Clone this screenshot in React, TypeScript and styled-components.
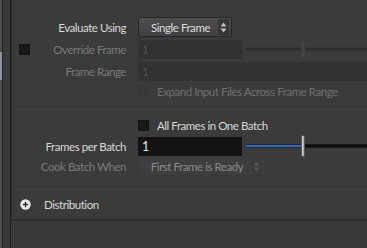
import React from 'react';
import styled, { createGlobalStyle } from 'styled-components';

const GlobalStyle = createGlobalStyle`
  html, body {
    margin: 0;
    padding: 0;
    background: #3a3a3a;
  }
  body {
    font-family: Lato, "Liberation Sans", sans-serif;
    font-size: 11.5px;
    letter-spacing: -0.45px;
  }
`;

const Screen = styled.div`
  width: 367px;
  height: 248px;
  display: flex;
  overflow: hidden;
  background: #3a3a3a;
`;

const Shelf = styled.div`
  width: 2px;
  background: #4e4e4e;
  display: flex;
  flex-direction: column;
  padding-top: 52px;
`;

const ShelfThumb = styled.div`
  height: 28px;
  background: #8d96a0;
`;

const VLine = styled.div<{ $color: string }>`
  width: 1px;
  background: ${p => p.$color};
`;

const Gutter = styled.div`
  width: 7px;
  background: #3a3a3a;
`;

const Main = styled.div`
  flex: 1;
  display: flex;
  flex-direction: column;
`;

const Panel = styled.div`
  height: 219px;
  border-left: 1px solid #2b2b2b;
  border-bottom: 2px solid #2b2b2b;
  background: #3b3b3b;
  display: flex;
  flex-direction: column;
`;

const Section = styled.div<{ $height: number; $top: number }>`
  height: ${p => p.$height}px;
  padding-top: ${p => p.$top}px;
  box-sizing: border-box;
  border-bottom: 1px solid #333333;
  display: flex;
  flex-direction: column;
  gap: 2px;
`;

const Row = styled.div<{ $h?: number }>`
  display: grid;
  grid-template-columns: 26px 88px 12px 1fr;
  align-items: center;
  height: ${p => p.$h ?? 20}px;
`;

const Label = styled.span<{ $off?: boolean }>`
  grid-column: 2;
  text-align: right;
  white-space: nowrap;
  color: ${p => (p.$off ? '#7a7a7a' : '#d8d8d8')};
`;

const Check = styled.div<{ $off?: boolean }>`
  width: 11px;
  height: 11px;
  box-sizing: border-box;
  background: ${p => (p.$off ? '#393939' : '#1a1a1a')};
  border: 1px solid ${p => (p.$off ? '#373737' : '#121212')};
`;

const LeftCheck = styled(Check)`
  grid-column: 1;
  margin-left: 7px;
`;

const Control = styled.div`
  grid-column: 4;
  display: flex;
  align-items: center;
  height: 100%;
  gap: 8px;
  min-width: 0;
`;

const Dropdown = styled.div<{ $w: number; $off?: boolean }>`
  width: ${p => p.$w}px;
  height: 20px;
  box-sizing: border-box;
  display: flex;
  align-items: center;
  border-radius: 2px;
  white-space: nowrap;
  background: ${p =>
    p.$off ? '#3e3e3e' : 'linear-gradient(#4d4d4d, #414141)'};
  border: 1px solid ${p => (p.$off ? '#383838' : '#262626')};
  color: ${p => (p.$off ? '#8a8a8a' : '#dcdcdc')};
`;

const DropText = styled.span`
  flex: 1;
  text-align: center;
  padding-left: 4px;
`;

const DropArrows = styled.div<{ $off?: boolean }>`
  width: 11px;
  height: 16px;
  margin-right: 2px;
  display: flex;
  align-items: center;
  justify-content: center;
  background: ${p => (p.$off ? '#3a3a3a' : '#363636')};
  border-radius: 1px;
`;

const Field = styled.div<{ $w?: number; $off?: boolean; $dark?: boolean }>`
  width: ${p => (p.$w ? `${p.$w}px` : 'auto')};
  flex: ${p => (p.$w ? 'none' : '1')};
  height: 19px;
  box-sizing: border-box;
  padding-left: 4px;
  display: flex;
  align-items: center;
  background: ${p => (p.$dark ? '#131313' : p.$off ? '#323232' : '#2a2a2a')};
  color: ${p => (p.$off ? '#555555' : '#e2e2e2')};
  font-size: ${p => (p.$dark ? 12.5 : 11.5)}px;
`;

const Slider = styled.div`
  flex: 1;
  height: 100%;
  display: flex;
  align-items: center;
  margin-left: -4px;
`;

const Track = styled.div<{ $w?: number; $color: string; $edge: string }>`
  width: ${p => (p.$w ? `${p.$w}px` : 'auto')};
  flex: ${p => (p.$w ? 'none' : '1')};
  height: 2px;
  background: ${p => p.$color};
  border-top: 1px solid ${p => p.$edge};
  border-bottom: 1px solid ${p => p.$edge};
`;

const Handle = styled.div<{ $off?: boolean }>`
  width: 4px;
  height: ${p => (p.$off ? 17 : 22)}px;
  box-sizing: border-box;
  border-radius: 1px;
  background: ${p =>
    p.$off ? '#444444' : 'linear-gradient(90deg, #e0e0e0, #9a9a9a)'};
  border: 1px solid ${p => (p.$off ? '#3f3f3f' : '#555555')};
`;

const InlineCheck = styled.div`
  display: flex;
  align-items: center;
  gap: 8px;
`;

const CheckText = styled.span<{ $off?: boolean }>`
  white-space: nowrap;
  color: ${p => (p.$off ? '#6f6f6f' : '#d8d8d8')};
`;

const Folder = styled.div`
  flex: 1;
  display: flex;
  align-items: center;
  gap: 13px;
  padding: 2px 0 0 8px;
  color: #d8d8d8;
`;

function Arrows({ off }: { off?: boolean }) {
  const c = off ? '#555' : '#bdbdbd';
  return (
    <DropArrows $off={off}>
      <svg width="7" height="11" viewBox="0 0 7 11">
        <path d="M3.5 0.5 L6.5 4.5 L0.5 4.5 Z" fill={c} />
        <path d="M3.5 10.5 L6.5 6.5 L0.5 6.5 Z" fill={c} />
      </svg>
    </DropArrows>
  );
}

function PlusCircle() {
  return (
    <svg width="11" height="11" viewBox="0 0 11 11">
      <circle cx="5.5" cy="5.5" r="5.2" fill="#ececec" />
      <path d="M5.5 2.8 V8.2 M2.8 5.5 H8.2" stroke="#2c2c2c" strokeWidth="1.4" />
    </svg>
  );
}

export default function App() {
  return (
    <Screen>
      <GlobalStyle />
      <Shelf>
        <ShelfThumb />
      </Shelf>
      <VLine $color="#202020" />
      <Gutter />
      <VLine $color="#1e1e1e" />
      <Main>
        <Panel>
          <Section $height={107} $top={17}>
            <Row>
              <Label>Evaluate Using</Label>
              <Control>
                <Dropdown $w={94}>
                  <DropText>Single Frame</DropText>
                  <Arrows />
                </Dropdown>
              </Control>
            </Row>
            <Row>
              <LeftCheck />
              <Label $off>Override Frame</Label>
              <Control>
                <Field $w={104} $off>1</Field>
                <Slider>
                  <Track $w={55} $color="#2d2d2d" $edge="#363636" />
                  <Handle $off />
                  <Track $color="#2d2d2d" $edge="#363636" />
                </Slider>
              </Control>
            </Row>
            <Row>
              <Label $off>Frame Range</Label>
              <Control>
                <Field $off>1</Field>
              </Control>
            </Row>
            <Row $h={16}>
              <Control>
                <InlineCheck>
                  <Check $off />
                  <CheckText $off>Expand Input Files Across Frame Range</CheckText>
                </InlineCheck>
              </Control>
            </Row>
          </Section>
          <Section $height={80} $top={11}>
            <Row $h={15}>
              <Control>
                <InlineCheck>
                  <Check />
                  <CheckText>All Frames in One Batch</CheckText>
                </InlineCheck>
              </Control>
            </Row>
            <Row $h={19}>
              <Label>Frames per Batch</Label>
              <Control>
                <Field $w={104} $dark>1</Field>
                <Slider>
                  <Track $w={55} $color="#3b6aa3" $edge="#1d2e44" />
                  <Handle />
                  <Track $color="#0c0c0c" $edge="#1a1a1a" />
                </Slider>
              </Control>
            </Row>
            <Row>
              <Label $off>Cook Batch When</Label>
              <Control>
                <Dropdown $w={127} $off>
                  <DropText>First Frame is Ready</DropText>
                  <Arrows off />
                </Dropdown>
              </Control>
            </Row>
          </Section>
          <Folder>
            <PlusCircle />
            <span>Distribution</span>
          </Folder>
        </Panel>
      </Main>
    </Screen>
  );
}
